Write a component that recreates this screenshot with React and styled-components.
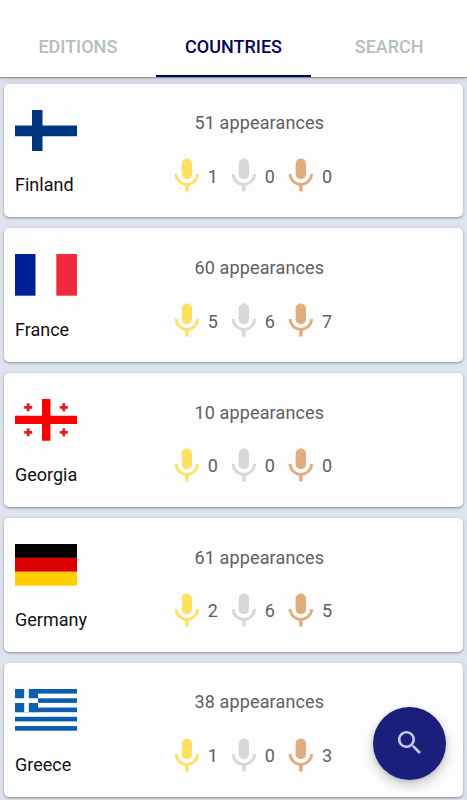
import React from 'react';
import styled, { createGlobalStyle } from 'styled-components';

const tabs = ['Editions', 'Countries', 'Search'];

const countries = [
  { name: 'Finland', appearances: 51, medals: [1, 0, 0] },
  { name: 'France', appearances: 60, medals: [5, 6, 7] },
  { name: 'Georgia', appearances: 10, medals: [0, 0, 0] },
  { name: 'Germany', appearances: 61, medals: [2, 6, 5] },
  { name: 'Greece', appearances: 38, medals: [1, 0, 3] }
];

const medalColors = ['#fde064', '#d8d8d8', '#e0ad7e'];

const flags = {
  Finland: (
    <>
      <rect width="62" height="42" fill="#fff" />
      <path d="M17 0h10.5v15.5H62v11H27.5V42H17V26.5H0v-11h17z" fill="#003580" />
    </>
  ),
  France: (
    <>
      <rect width="62" height="42" fill="#fff" />
      <rect width="20.5" height="42" fill="#00209a" />
      <rect x="41.3" width="20.7" height="42" fill="#ee2a3c" />
    </>
  ),
  Georgia: (
    <>
      <rect width="62" height="42" fill="#fff" />
      <path d="M27 0h8.4v17H62v8.2H35.4V42H27V25.2H0V17h27z" fill="#ff0000" />
      {[[13.2, 8.4], [48.8, 8.4], [13.2, 33.6], [48.8, 33.6]].map(([x, y]) => (
        <path
          key={`${x}-${y}`}
          d={`M${x - 1.4} ${y - 4}h2.8v2.6h2.6v2.8h-2.6v2.6h-2.8v-2.6h-2.6v-2.8h2.6z`}
          fill="#e8191c"
        />
      ))}
    </>
  ),
  Germany: (
    <>
      <rect width="62" height="14" fill="#000" />
      <rect y="14" width="62" height="14" fill="#dd0000" />
      <rect y="28" width="62" height="14" fill="#ffce00" />
    </>
  ),
  Greece: (
    <>
      <rect width="62" height="42" fill="#fff" />
      {[0, 2, 4, 6, 8].map((stripe) => (
        <rect key={stripe} y={stripe * 4.667} width="62" height="4.667" fill="#0d5eaf" />
      ))}
      <rect width="23" height="23.33" fill="#0d5eaf" />
      <path d="M9.2 0h4.6v9.33H23V14h-9.2v9.33H9.2V14H0V9.33h9.2z" fill="#fff" />
    </>
  )
};

const Mic = ({ color }) => (
  <MicIcon viewBox="0 0 24 24" fill={color}>
    <path d="M12 14c1.66 0 2.99-1.34 2.99-3L15 5c0-1.66-1.34-3-3-3S9 3.34 9 5v6c0 1.66 1.34 3 3 3zm5.3-3c0 3-2.54 5.1-5.3 5.1S6.7 14 6.7 11H5c0 3.41 2.72 6.23 6 6.72V21h2v-3.28c3.28-.48 6-3.3 6-6.72h-1.7z" />
  </MicIcon>
);

const CountryCard = ({ name, appearances, medals }) => (
  <Card>
    <Country>
      <Flag viewBox="0 0 62 42" preserveAspectRatio="none">{flags[name]}</Flag>
      <Name>{name}</Name>
    </Country>
    <Stats>
      <Appearances>{appearances} appearances</Appearances>
      <Medals>
        {medals.map((count, index) => (
          <Medal key={index}>
            <Mic color={medalColors[index]} />
            <Count>{count}</Count>
          </Medal>
        ))}
      </Medals>
    </Stats>
  </Card>
);

const App = () => (
  <Screen>
    <GlobalStyle />
    <TabBar>
      {tabs.map((tab) => (
        <Tab key={tab} $active={tab === 'Countries'}>{tab}</Tab>
      ))}
    </TabBar>
    <List>
      {countries.map((country) => <CountryCard key={country.name} {...country} />)}
    </List>
    <SearchButton aria-label="Search">
      <svg width="31.5" height="31.5" viewBox="0 0 24 24" fill="#c5c8f5">
        <path d="M15.5 14h-.79l-.28-.27C15.41 12.59 16 11.11 16 9.5 16 5.91 13.09 3 9.5 3S3 5.91 3 9.5 5.91 16 9.5 16c1.61 0 3.09-.59 4.23-1.57l.27.28v.79l5 4.99L20.49 19l-4.99-5zm-6 0C7.01 14 5 11.99 5 9.5S7.01 5 9.5 5 14 7.01 14 9.5 11.99 14 9.5 14z" />
      </svg>
    </SearchButton>
  </Screen>
);

export default App;

const GlobalStyle = createGlobalStyle`
  * {
    box-sizing: border-box;
  }

  body {
    margin: 0;
    overflow: hidden;
    font-family: Roboto, sans-serif;
  }
`;

const Screen = styled.div`
  height: 100vh;
  display: flex;
  flex-direction: column;
  overflow: hidden;
  background: #dde4ed;
`;

const TabBar = styled.nav`
  position: relative;
  flex: none;
  display: flex;
  height: 77px;
  padding-top: 16px;
  background: #fefefe;
  box-shadow: 0 1px 1px rgba(0, 0, 0, 0.28), 0 2px 5px rgba(0, 0, 0, 0.14);
`;

const Tab = styled.button`
  flex: 1;
  padding: 2px 0 0;
  border: 0;
  border-bottom: 2.5px solid ${({ $active }) => ($active ? '#04045c' : 'transparent')};
  background: none;
  color: ${({ $active }) => ($active ? '#04045c' : '#b3bebf')};
  font: 500 18px Roboto, sans-serif;
  text-transform: uppercase;
`;

const List = styled.main`
  display: flex;
  flex-direction: column;
  gap: 11.4px;
  padding: 6.5px 4px 0;
`;

const Card = styled.article`
  flex: none;
  display: flex;
  height: 133.5px;
  padding: 26px 11px 0;
  border-radius: 5px;
  background: #fdfdfd;
  box-shadow: 0 1px 2px rgba(0, 0, 0, 0.3), 0 1px 4px rgba(0, 0, 0, 0.12);
`;

const Country = styled.div`
  width: 151px;
`;

const Flag = styled.svg`
  display: block;
  width: 62px;
  height: 41.7px;
`;

const Name = styled.div`
  margin-top: 23.1px;
  color: #111;
  font-size: 18px;
  line-height: 22px;
`;

const Stats = styled.div`
  color: #606060;
  font-size: 18px;
`;

const Appearances = styled.div`
  padding: 0.4px 0 0 28.5px;
  letter-spacing: 0.13px;
  line-height: 26px;
`;

const Medals = styled.div`
  display: flex;
  margin-top: 19.1px;
`;

const Medal = styled.div`
  display: flex;
  align-items: center;
  width: 57.1px;
`;

const MicIcon = styled.svg`
  flex: none;
  width: 41.7px;
  height: 41.7px;
`;

const Count = styled.span`
  padding-top: 0.6px;
`;

const SearchButton = styled.button`
  position: fixed;
  right: 21px;
  bottom: 20.5px;
  display: flex;
  align-items: center;
  justify-content: center;
  width: 73px;
  height: 73px;
  padding: 0;
  border: 0;
  border-radius: 50%;
  background: #1a1f7c;
  box-shadow: 0 5px 12px rgba(0, 0, 0, 0.22), 0 1px 4px rgba(0, 0, 0, 0.12);
`;
